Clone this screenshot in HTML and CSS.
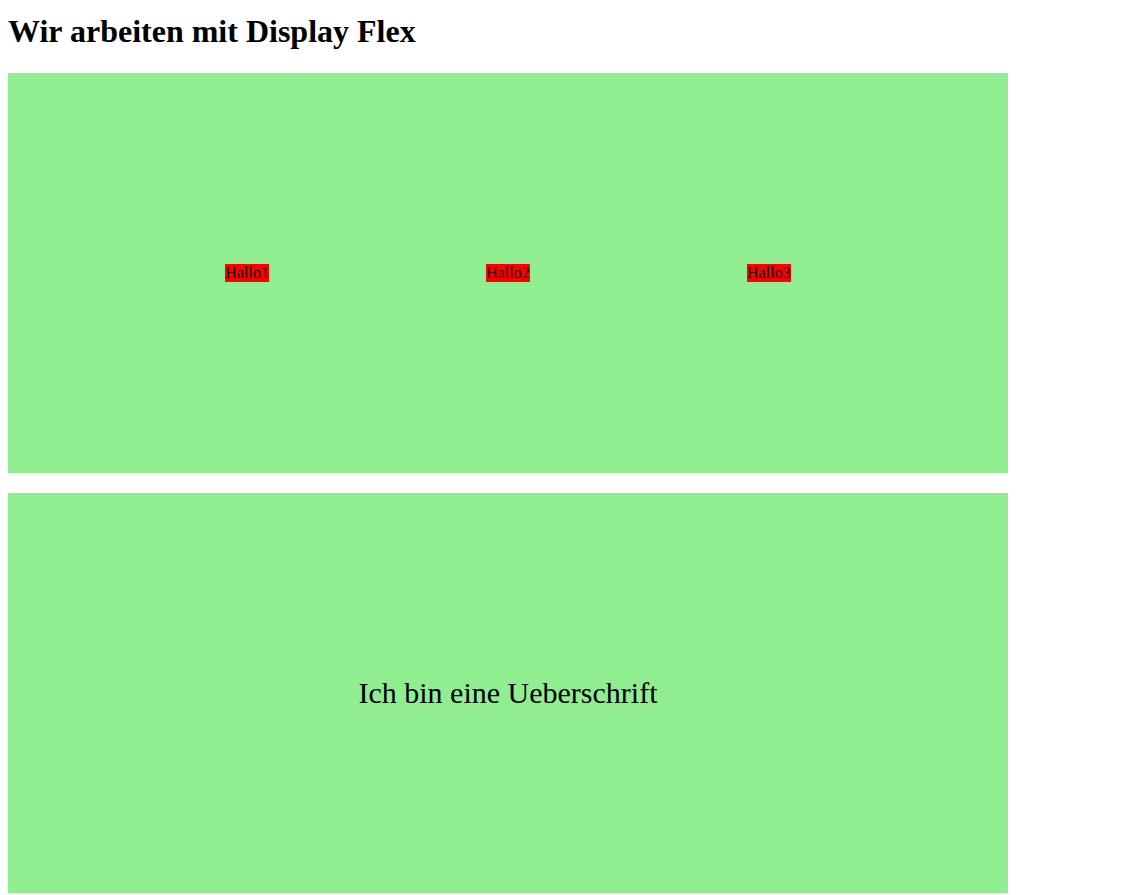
FILE: index.html
```html
<!DOCTYPE html>
<html lang="de">
<head>
<meta charset="utf-8">
<title>Display Flex</title>
<link rel="stylesheet" href="styles.css">
</head>
<body>
<h1 class="title">Wir arbeiten mit Display Flex</h1>
<div class="box row">
  <div class="item">Hallo1</div>
  <div class="item">Hallo2</div>
  <div class="item">Hallo3</div>
</div>
<div class="box center">
  <div class="heading">Ich bin eine Ueberschrift</div>
</div>
</body>
</html>
```
FILE: styles.css
```css
body {
  margin: 0;
  padding: 8px;
  font-family: "Liberation Serif", "Times New Roman", serif;
  color: #000;
  background: #fff;
}
.title {
  font-size: 32px;
  font-weight: bold;
  line-height: 37px;
  margin: 5px 0 23px;
}
.box {
  width: 1000px;
  height: 400px;
  background: #90ee90;
  display: flex;
  align-items: center;
}
.row {
  justify-content: space-evenly;
  margin-bottom: 20px;
}
.center {
  justify-content: center;
}
.item {
  background: #ff0000;
  font-size: 16px;
  line-height: 18px;
}
.heading {
  font-size: 30px;
  line-height: 34px;
}
```
